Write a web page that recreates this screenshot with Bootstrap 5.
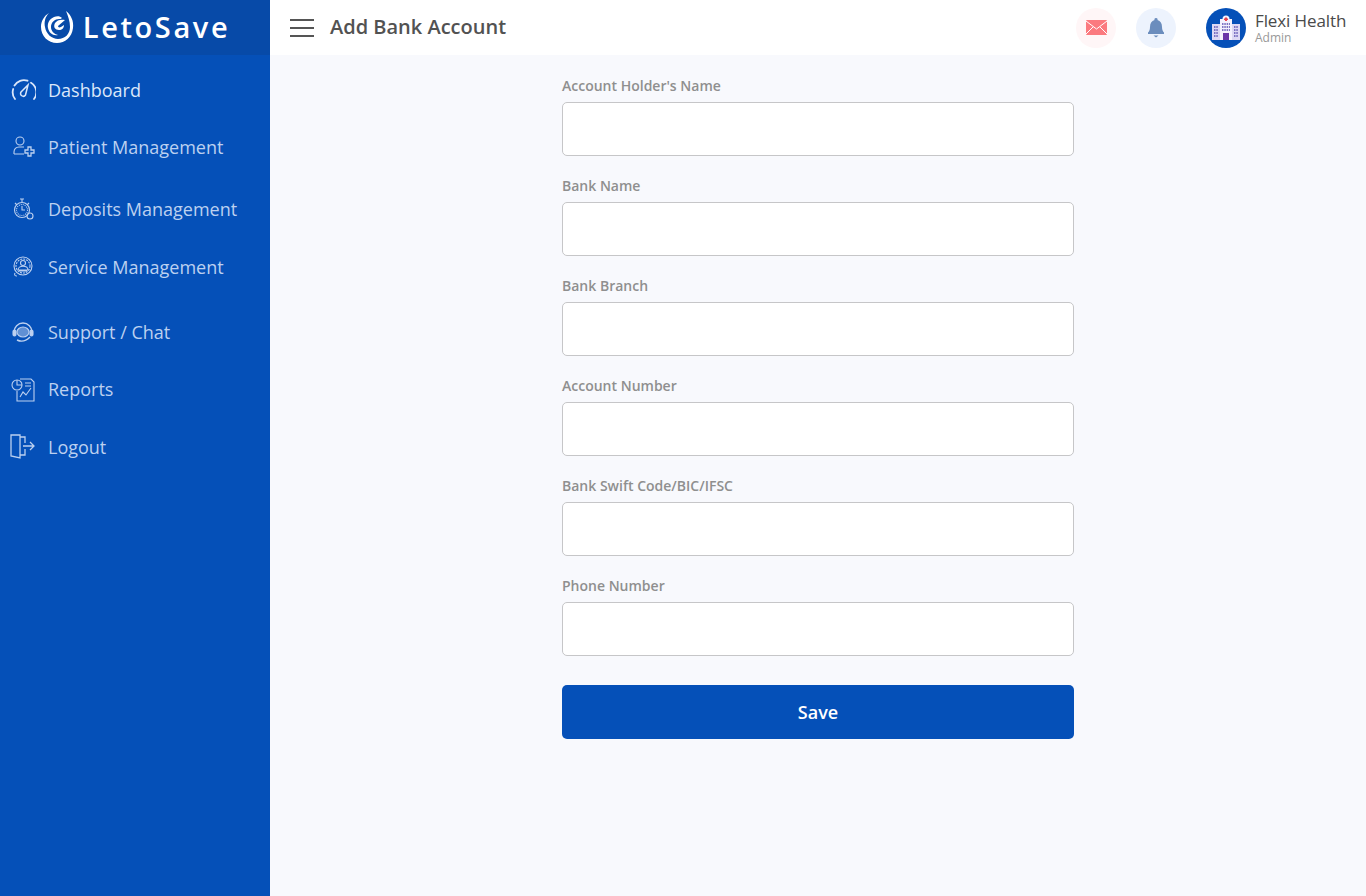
<!DOCTYPE html>
<html lang="en"><head><meta charset="utf-8"><title>Add Bank Account</title>
<link href="https://cdn.jsdelivr.net/npm/bootstrap@5.3.0/dist/css/bootstrap.min.css" rel="stylesheet">
<style>
html,body{height:100%}
body{font-family:"Open Sans",sans-serif;background:#f8f9fd;overflow:hidden}
.shell{height:896px}
.side{width:270px;background:#0550b8;flex:none}
.brand{height:55px;background:#074aa8;color:#fff;font-size:29px;font-weight:600;letter-spacing:2.6px;gap:9px;padding-bottom:2px}
.brand svg{width:34px;height:34px}
.menu{padding:0;margin:0;list-style:none}
.menu a{display:flex;align-items:center;color:#bcd0f0;font-size:18px;text-decoration:none;padding-left:10px;height:30px}
.menu a.on{color:#dbe7fa}
.menu svg{width:26px;height:26px;margin-right:12px;flex:none;fill:none;stroke:currentColor;stroke-width:1.1}
.menu li{margin-bottom:27px}
.menu li.first{margin-top:20px}
.menu li.g1{margin-bottom:32px}
.menu li.g2{margin-bottom:28px}
.menu li.g3{margin-bottom:35px}
.menu li.g4{margin-bottom:28px}
.top{height:55px;background:#fff;padding-left:20px;padding-right:20px}
.burger{width:24px;height:18px;display:flex;flex-direction:column;justify-content:space-between;margin-right:16px}
.burger i{display:block;height:2px;background:#555}
.pagename{font-size:20px;font-weight:600;color:#525252;line-height:1;padding-bottom:2px}
.round{width:40px;height:40px;border-radius:50%;display:flex;align-items:center;justify-content:center}
.r-mail{background:#fff6f7;margin-right:20px}
.r-bell{background:#edf3fd;margin-right:30px}
.avatar{width:40px;height:40px;border-radius:50%;background:#0550b8;margin-right:9px;flex:none}
.who{width:91px;white-space:nowrap}
.uname{font-size:17px;color:#4a4a4a;line-height:20px;letter-spacing:-.1px}
.urole{font-size:12px;color:#999;line-height:14px}
.formbox{width:512px;margin:0 auto;padding-top:21px}
.fld{margin-bottom:20px}
.fld label{display:block;font-size:14px;font-weight:600;color:#8f8f8f;line-height:20px;margin-bottom:6px}
.fld .form-control{height:54px;border:1px solid #c6c6c8;border-radius:5px;background:#fff}
.savebtn{height:54px;width:100%;margin-top:9px;background:#0550b8;border:0;border-radius:5px;color:#fff;font-weight:600;font-size:18px}
</style></head>
<body>
<div class="shell d-flex">
<aside class="side">
 <div class="brand d-flex align-items-center justify-content-center">
  <svg viewBox="0 0 34 34"><path d="M26 1c5 4 8 10 7 17-1 9-8 15-16 15C8 33 1 26 1 17 1 11 4 6 9 3 5 7 4 12 5 17c1 7 7 12 13 12 7 0 12-5 12-12 0-6-2-11-4-16z" fill="#fff"/><path d="M22 8c-2-2-5-2-8-1-5 2-7 7-6 11 1 5 5 8 10 7-4-1-7-4-7-8 0-5 4-8 8-8 1 0 2 0 3-1z" fill="#fff"/><path d="M25 10c-4-1-8 0-10 3-2 4 0 7 4 7 3 0 5-2 5-5l-3 2c-2 1-3 0-3-1l7-6z" fill="#fff"/></svg>
  <span>LetoSave</span>
 </div>
 <ul class="menu">
  <li class="first"><a class="on" href="#"><svg viewBox="0 0 26 26"><path stroke-width="1.800" stroke-linecap="round" d="M5 22A11 11 0 0 1 3.200 12M4.500 8.500A11 11 0 0 1 17.500 3.700M21 5.800A11 11 0 0 1 24 22"/><path stroke-width="1.500" d="M11 15L18 8 15.500 18A2.700 2.700 0 0 1 11 15z"/></svg>Dashboard</a></li>
  <li class="g1"><a href="#"><svg viewBox="0 0 26 26"><circle cx="10" cy="7" r="4"/><path d="M4 20v-2c0-3 2-5 5-5h5M4 20h10"/><path stroke-width="1.300" d="M18 13h3v3h3v3h-3v3h-3v-3h-3v-3h3z"/></svg>Patient Management</a></li>
  <li class="g2"><a href="#"><svg viewBox="0 0 26 26"><circle cx="12" cy="14" r="7.500"/><circle cx="12" cy="14" r="5.500" stroke-dasharray="1 1"/><path d="M10 3h4M12 3v3M5 7l2 2M19 7l-2 2M12 10v4h3"/><circle cx="20" cy="20" r="3"/></svg>Deposits Management</a></li>
  <li class="g3"><a href="#"><svg viewBox="0 0 26 26"><circle cx="13" cy="12" r="9"/><circle cx="13" cy="12" r="7" stroke-dasharray="2 1"/><circle cx="13" cy="9" r="2.500"/><path d="M8 16c0-5 10-5 10 0zM5 19c-1 2 0 3 2 3M9 17h8"/></svg>Service Management</a></li>
  <li><a href="#"><svg viewBox="0 0 26 26"><path stroke-width="1.400" d="M4 13a9 9 0 0 1 18 0M7 21c4 2 9 1 13-3"/><rect x="3" y="11" width="3" height="6" rx="1.500" fill="currentColor"/><rect x="20" y="11" width="3" height="6" rx="1.500" fill="currentColor"/><ellipse cx="13" cy="13" rx="6" ry="5" fill="currentColor" fill-opacity=".5"/></svg>Support / Chat</a></li>
  <li class="g4"><a href="#"><svg viewBox="0 0 26 26"><path d="M10 3h11l3 3v19H7V15M15 7h6M15 10h6"/><circle cx="7" cy="9" r="5"/><path d="M7 4v5h5M10 21l3-5 3 3 5-7"/></svg>Reports</a></li>
  <li><a href="#"><svg viewBox="0 0 26 26"><path stroke-width="1.300" d="M1 1h9l0 23-9-2zM1 1v21M10 3h5v6M10 21h5v-6M13 12h11M20 8l4 4-4 4"/></svg>Logout</a></li>
 </ul>
</aside>
<div class="flex-grow-1 d-flex flex-column">
 <header class="top d-flex align-items-center">
  <div class="burger"><i></i><i></i><i></i></div>
  <div class="pagename">Add Bank Account</div>
  <div class="ms-auto d-flex align-items-center">
   <div class="round r-mail"><svg width="21" height="15" viewBox="0 0 21 15"><rect width="21" height="15" rx="1" fill="#fb7a7f"/><path d="M0 1l10.500 8L21 1M0 14l7-7M21 14l-7-7" fill="none" stroke="#fff" stroke-width="1"/></svg></div>
   <div class="round r-bell"><svg width="18" height="20" viewBox="0 0 18 20"><path d="M9 0a1.500 1.500 0 0 1 1.500 2C13.500 3 15 5.500 15 9c0 3 1 4.500 2 5.500V16H1v-1.500C2 13.500 3 12 3 9c0-3.500 1.500-6 4.500-7A1.500 1.500 0 0 1 9 0z" fill="#6b8dbd"/><path d="M6.500 17.500h5L9 19.500z" fill="#6b8dbd"/></svg></div>
   <div class="avatar d-flex align-items-center justify-content-center"><svg width="30" height="26" viewBox="0 0 30 26"><rect x="1" y="9" width="28" height="16" fill="#dcd8f4"/><rect x="9" y="4" width="12" height="21" fill="#f4f2fd"/><circle cx="15" cy="4" r="3.500" fill="#f4f2fd"/><path d="M14 2.500h2v1h1v1.500h-1v1h-2V5h-1V3.500h1z" fill="#e8434f"/><rect x="12" y="18" width="6" height="7" fill="#6a35a8"/><path d="M3 12h4M3 15h4M3 18h4M3 21h4M23 12h4M23 15h4M23 18h4M23 21h4M11 9h8M11 12h8M11 15h8" stroke="#5a4fb0" stroke-width="1.400" stroke-dasharray="1.500 .8"/></svg></div>
   <div class="who"><div class="uname">Flexi Health</div><div class="urole">Admin</div></div>
  </div>
 </header>
 <main class="flex-grow-1">
  <form class="formbox">
   <div class="fld"><label for="a">Account Holder's Name</label><input id="a" class="form-control" type="text"></div>
   <div class="fld"><label for="b">Bank Name</label><input id="b" class="form-control" type="text"></div>
   <div class="fld"><label for="c">Bank Branch</label><input id="c" class="form-control" type="text"></div>
   <div class="fld"><label for="d">Account Number</label><input id="d" class="form-control" type="text"></div>
   <div class="fld"><label for="e">Bank Swift Code/BIC/IFSC</label><input id="e" class="form-control" type="text"></div>
   <div class="fld"><label for="f">Phone Number</label><input id="f" class="form-control" type="text"></div>
   <button type="button" class="btn savebtn">Save</button>
  </form>
 </main>
</div>
</div>
<script src="https://cdn.jsdelivr.net/npm/bootstrap@5.3.0/dist/js/bootstrap.bundle.min.js"></script>
</body></html>
